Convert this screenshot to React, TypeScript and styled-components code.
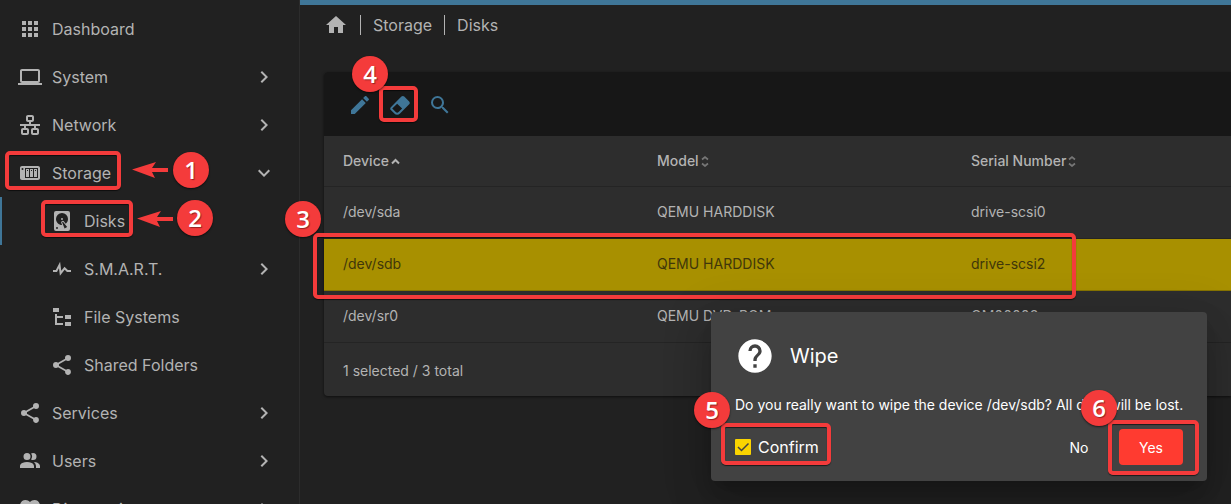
import React from "react";
import styled, { createGlobalStyle } from "styled-components";

const red = "#f43b3b";
const blue = "#3f7698";

const Global = createGlobalStyle`
  * { box-sizing: border-box; }
  body {
    margin: 0;
    background: #212121;
    color: #b3b3b3;
    font-family: Inter, "Liberation Sans", sans-serif;
    font-size: 14px;
    overflow: hidden;
  }
  button, input { font: inherit; }
`;

const icons = {
  apps: "M16,20H20V16H16M16,14H20V10H16M10,8H14V4H10M16,8H20V4H16M10,14H14V10H10M4,14H8V10H4M4,20H8V16H4M10,20H14V16H10M4,8H8V4H4V8Z",
  laptop:
    "M4,6H20V16H4M20,18A2,2 0 0,0 22,16V6C22,4.89 21.1,4 20,4H4C2.89,4 2,4.89 2,6V16A2,2 0 0,0 4,18H0V20H24V18H20Z",
  lan: "M10,2C8.89,2 8,2.89 8,4V7C8,8.11 8.89,9 10,9H11V11H2V13H6V15H5C3.89,15 3,15.89 3,17V20C3,21.11 3.89,22 5,22H9C10.11,22 11,21.11 11,20V17C11,15.89 10.11,15 9,15H8V13H16V15H15C13.89,15 13,15.89 13,17V20C13,21.11 13.89,22 15,22H19C20.11,22 21,21.11 21,20V17C21,15.89 20.11,15 19,15H18V13H22V11H13V9H14C15.11,9 16,8.11 16,7V4C16,2.89 15.11,2 14,2H10M10,4H14V7H10V4M5,17H9V20H5V17M15,17H19V20H15V17Z",
  nas: "M4,5C2.89,5 2,5.89 2,7V17C2,18.11 2.89,19 4,19H20C21.11,19 22,18.11 22,17V7C22,5.89 21.11,5 20,5H4M4.5,7A1,1 0 0,1 5.5,8A1,1 0 0,1 4.5,9A1,1 0 0,1 3.5,8A1,1 0 0,1 4.5,7M7,7H20V17H7V7M8,8V16H11V8H8M12,8V16H15V8H12M16,8V16H19V8H16M9,9H10V10H9V9M13,9H14V10H13V9M17,9H18V10H17V9Z",
  harddisk:
    "M6,2H18A2,2 0 0,1 20,4V20A2,2 0 0,1 18,22H6A2,2 0 0,1 4,20V4A2,2 0 0,1 6,2M12,4A6,6 0 0,0 6,10C6,13.31 8.69,16 12.1,16L11.22,13.77C10.95,13.29 11.11,12.68 11.59,12.4L12.45,11.9C12.93,11.63 13.54,11.79 13.82,12.27L15.74,14.69C17.12,13.59 18,11.9 18,10A6,6 0 0,0 12,4M12,9A1,1 0 0,1 13,10A1,1 0 0,1 12,11A1,1 0 0,1 11,10A1,1 0 0,1 12,9M7,18A1,1 0 0,0 6,19A1,1 0 0,0 7,20A1,1 0 0,0 8,19A1,1 0 0,0 7,18M12.09,13.27L14.58,19.58L17.17,18.08L12.95,12.77L12.09,13.27Z",
  pulse:
    "M3,13H5.79L10.1,4.79L11.28,13.75L14.5,9.66L17.83,13H21V15H17L14.67,12.67L9.92,18.73L8.94,11.31L7,15H3V13Z",
  tree: "M3,3H9V7H3V3M15,10H21V14H15V10M15,17H21V21H15V17M13,13H7V18H13V20H7L5,20V9H7V11H13V13Z",
  share:
    "M18,16.08C17.24,16.08 16.56,16.38 16.04,16.85L8.91,12.7C8.96,12.47 9,12.24 9,12C9,11.76 8.96,11.53 8.91,11.3L15.96,7.19C16.5,7.69 17.21,8 18,8A3,3 0 0,0 21,5A3,3 0 0,0 18,2A3,3 0 0,0 15,5C15,5.24 15.04,5.47 15.09,5.7L8.04,9.81C7.5,9.31 6.79,9 6,9A3,3 0 0,0 3,12A3,3 0 0,0 6,15C6.79,15 7.5,14.69 8.04,14.19L15.16,18.34C15.11,18.55 15.08,18.77 15.08,19C15.08,20.61 16.39,21.91 18,21.91C19.61,21.91 20.92,20.61 20.92,19A2.92,2.92 0 0,0 18,16.08Z",
  users:
    "M16 17V19H2V17S2 13 9 13 16 17 16 17M12.5 7.5A3.5 3.5 0 1 0 9 11A3.5 3.5 0 0 0 12.5 7.5M15.94 13A5.32 5.32 0 0 1 18 17V19H22V17S22 13.37 15.94 13M15 4A3.39 3.39 0 0 0 13.07 4.59A5 5 0 0 1 13.07 10.41A3.39 3.39 0 0 0 15 11A3.5 3.5 0 0 0 15 4Z",
  heart:
    "M12,21.35L10.55,20.03C5.4,15.36 2,12.27 2,8.5C2,5.41 4.42,3 7.5,3C9.24,3 10.91,3.81 12,5.08C13.09,3.81 14.76,3 16.5,3C19.58,3 22,5.41 22,8.5C22,12.27 18.6,15.36 13.45,20.03L12,21.35Z",
  home: "M10,20V14H14V20H19V12H22L12,3L2,12H5V20H10Z",
  pencil:
    "M20.71,7.04C21.1,6.65 21.1,6 20.71,5.63L18.37,3.29C18,2.9 17.35,2.9 16.96,3.29L15.12,5.12L18.87,8.87M3,17.25V21H6.75L17.81,9.93L14.06,6.18L3,17.25Z",
  eraser:
    "M16.24,3.56L21.19,8.5C21.97,9.29 21.97,10.55 21.19,11.34L12,20.53C10.44,22.09 7.91,22.09 6.34,20.53L2.81,17C2.03,16.21 2.03,14.95 2.81,14.16L13.41,3.56C14.2,2.78 15.46,2.78 16.24,3.56M4.22,15.58L7.76,19.11C8.54,19.9 9.8,19.9 10.59,19.11L14.12,15.58L9.17,10.63L4.22,15.58Z",
  magnify:
    "M9.5,3A6.5,6.5 0 0,1 16,9.5C16,11.11 15.41,12.59 14.44,13.73L14.71,14H15.5L20.5,19L19,20.5L14,15.5V14.71L13.73,14.44C12.59,15.41 11.11,16 9.5,16A6.5,6.5 0 0,1 3,9.5A6.5,6.5 0 0,1 9.5,3M9.5,5C7,5 5,7 5,9.5C5,12 7,14 9.5,14C12,14 14,12 14,9.5C14,7 12,5 9.5,5Z",
  help: "M15.07,11.25L14.17,12.17C13.45,12.89 13,13.5 13,15H11V14.5C11,13.39 11.45,12.39 12.17,11.67L13.41,10.41C13.78,10.05 14,9.55 14,9C14,7.89 13.1,7 12,7A2,2 0 0,0 10,9H8A4,4 0 0,1 12,5A4,4 0 0,1 16,9C16,9.88 15.64,10.67 15.07,11.25M13,19H11V17H13M12,2A10,10 0 0,0 2,12A10,10 0 0,0 12,22A10,10 0 0,0 22,12C22,6.47 17.5,2 12,2Z",
  right: "M8.59,16.58L13.17,12L8.59,7.41L10,6L16,12L10,18L8.59,16.58Z",
  down: "M7.41,8.58L12,13.17L16.59,8.58L18,10L12,16L6,10L7.41,8.58Z",
};

type IconName = keyof typeof icons;

const Svg = styled.svg`
  display: block;
  flex: none;
  fill: currentColor;
`;

const Icon = ({ name, size = 24 }: { name: IconName; size?: number }) => (
  <Svg width={size} height={size} viewBox="0 0 24 24" aria-hidden="true">
    <path d={icons[name]} />
  </Svg>
);

/* Tutorial callouts, each anchored to the part it points at. */

const Frame = styled.span<{ $x: number; $y: number; $w: number; $h: number }>`
  position: absolute;
  left: ${(p) => p.$x}px;
  top: ${(p) => p.$y}px;
  width: ${(p) => p.$w}px;
  height: ${(p) => p.$h}px;
  border: 4px solid ${red};
  border-radius: 5px;
  box-shadow: 0 1px 1px rgba(0, 0, 0, 0.6), inset 0 1px 1px rgba(0, 0, 0, 0.6);
  pointer-events: none;
  z-index: 2;
`;

const Badge = styled.span<{ $x: number; $y: number }>`
  position: absolute;
  left: ${(p) => p.$x}px;
  top: ${(p) => p.$y}px;
  width: 36px;
  height: 36px;
  border-radius: 50%;
  background: ${red};
  color: #fff;
  font: 600 24px/36px "Open Sans", sans-serif;
  text-align: center;
  text-shadow: 1px 1px 1px rgba(0, 0, 0, 0.4);
  box-shadow: 0 1px 2px rgba(0, 0, 0, 0.6);
  pointer-events: none;
  z-index: 3;
`;

const ArrowSvg = styled.svg<{ $x: number; $y: number }>`
  position: absolute;
  left: ${(p) => p.$x}px;
  top: ${(p) => p.$y}px;
  fill: ${red};
  pointer-events: none;
`;

const Arrow = ({ x, y }: { x: number; y: number }) => (
  <ArrowSvg $x={x} $y={y} width="36" height="16" viewBox="0 0 36 16" aria-hidden="true">
    <path d="M0 7.5L24 0L20 6H36V10H20L23 16Z" />
  </ArrowSvg>
);

const Page = styled.div`
  display: flex;
  height: 100vh;
  overflow: hidden;
  position: relative;
`;

const Sidebar = styled.nav`
  flex: none;
  width: 300px;
  padding-top: 5px;
  border-right: 1px solid #2c2c2c;
`;

const NavList = styled.ul`
  list-style: none;
  margin: 0;
  padding: 0;
`;

const NavItem = styled.li`
  position: relative;
`;

const NavLink = styled.a<{ $sub?: boolean; $active?: boolean }>`
  display: flex;
  align-items: center;
  gap: 10px;
  height: 48px;
  padding-right: 23px;
  padding-left: ${(p) => (p.$sub ? 50 : 18)}px;
  box-shadow: ${(p) => (p.$active ? `inset 2px 0 ${blue}` : "none")};
  color: inherit;
  font-size: 16px;
  line-height: 24px;
  text-decoration: none;
`;

const NavText = styled.span`
  flex: 1;
`;

const Main = styled.main`
  flex: 1;
  min-width: 0;
  border-top: 5px solid ${blue};
  position: relative;
  z-index: 1;
`;

const Breadcrumb = styled.nav`
  display: flex;
  align-items: center;
  height: 40px;
  padding-left: 24px;
  font-size: 16px;
  line-height: 20px;
`;

const Crumb = styled.a`
  display: block;
  color: inherit;
  text-decoration: none;
  & + & {
    margin-left: 12px;
    padding-left: 12px;
    border-left: 1px solid #b3b3b3;
  }
`;

const Card = styled.section`
  margin: 27px 0 0 24px;
  border-radius: 4px 0 0 4px;
  background: #2d2d2d;
  box-shadow: 0 1px 3px rgba(0, 0, 0, 0.6);
`;

const Toolbar = styled.div`
  position: relative;
  display: flex;
  align-items: center;
  height: 64px;
  padding: 2px 0 0 16px;
  border-radius: 4px 0 0 0;
  background: #171717;
  color: ${blue};
`;

const ToolButton = styled.button`
  display: flex;
  align-items: center;
  justify-content: center;
  width: 40px;
  height: 40px;
  padding: 0;
  border: 0;
  background: none;
  color: inherit;
`;

const TableArea = styled.div`
  position: relative;
`;

const Table = styled.table`
  width: 100%;
  table-layout: fixed;
  border-collapse: separate;
  border-spacing: 0;
  line-height: 20px;
`;

const Head = styled.th<{ $wide?: boolean }>`
  width: ${(p) => (p.$wide ? "auto" : "314px")};
  height: 51px;
  padding: 0 0 0 19px;
  border-bottom: 1px solid #242424;
  font-weight: 500;
  text-align: left;
`;

const HeadLabel = styled.span`
  display: flex;
  align-items: center;
  gap: 2px;
`;

const Row = styled.tr<{ $selected?: boolean }>`
  background: ${(p) => (p.$selected ? "#a89000" : "transparent")};
  color: ${(p) => (p.$selected ? "#40370a" : "inherit")};
`;

const Cell = styled.td`
  height: 52px;
  padding: 0 0 2px 19px;
  border-bottom: 1px solid rgba(0, 0, 0, 0.2);
`;

const TableFooter = styled.div`
  padding: 18px 19px 15px;
  line-height: 20px;
`;

const SortMark = styled.svg`
  fill: none;
  stroke: currentColor;
`;

const SortedUp = () => (
  <SortMark width="9" height="10" viewBox="0 0 9 10" strokeWidth="2" aria-hidden="true">
    <path d="M1 7.5L4.5 4L8 7.5" />
  </SortMark>
);

const Unsorted = () => (
  <SortMark width="8" height="12" viewBox="0 0 8 12" strokeWidth="1.7" opacity="0.55" aria-hidden="true">
    <path d="M1 4.5L4 2L7 4.5M1 8.5L4 11L7 8.5" />
  </SortMark>
);

const Dialog = styled.div`
  position: absolute;
  top: 312px;
  right: 24px;
  width: 496px;
  padding: 24px 24px 16px;
  border-radius: 4px;
  background: #424242;
  color: #fff;
  box-shadow: 0 11px 15px -7px rgba(0, 0, 0, 0.2), 0 24px 38px 3px rgba(0, 0, 0, 0.14),
    0 9px 46px 8px rgba(0, 0, 0, 0.12);
  z-index: 5;
`;

const DialogHeader = styled.header`
  display: flex;
  align-items: center;
  gap: 15px;
`;

const DialogTitle = styled.h2`
  margin: 0;
  font-size: 20px;
  font-weight: 400;
  line-height: 32px;
`;

const DialogText = styled.p`
  margin: 19px 0 14px;
  line-height: 20px;
  white-space: nowrap;
`;

const DialogActions = styled.div`
  display: flex;
  align-items: center;
  gap: 8px;
`;

const ConfirmLabel = styled.label`
  display: flex;
  align-items: center;
  gap: 7px;
  margin-right: auto;
  font-size: 16px;
  line-height: 24px;
`;

const CheckWrap = styled.span`
  position: relative;
  display: flex;
`;

const CheckInput = styled.input`
  appearance: none;
  width: 16px;
  height: 16px;
  margin: 0;
  border: 2px solid #b3b3b3;
  border-radius: 1px;
  &:checked {
    border: 0;
    background: #fad400;
  }
`;

const CheckMark = styled.svg`
  position: absolute;
  inset: 0;
  fill: none;
  stroke: #424242;
  stroke-width: 1.5;
  pointer-events: none;
`;

const DialogButton = styled.button<{ $danger?: boolean }>`
  width: 64px;
  height: 36px;
  padding: 0;
  border: 0;
  border-radius: 4px;
  background: ${(p) => (p.$danger ? "#ff3b30" : "transparent")};
  color: #fff;
`;

type NavEntry = {
  label: string;
  icon: IconName;
  arrow?: "right" | "down";
  sub?: boolean;
  active?: boolean;
  callout?: React.ReactNode;
};

const navEntries: NavEntry[] = [
  { label: "Dashboard", icon: "apps" },
  { label: "System", icon: "laptop", arrow: "right" },
  { label: "Network", icon: "lan", arrow: "right" },
  {
    label: "Storage",
    icon: "nas",
    arrow: "down",
    callout: (
      <>
        <Frame $x={5} $y={2} $w={116} $h={39} />
        <Arrow x={132} y={13} />
        <Badge $x={173} $y={3}>1</Badge>
      </>
    ),
  },
  {
    label: "Disks",
    icon: "harddisk",
    sub: true,
    active: true,
    callout: (
      <>
        <Frame $x={41} $y={3} $w={92} $h={37} />
        <Arrow x={137} y={14} />
        <Badge $x={177} $y={3}>2</Badge>
      </>
    ),
  },
  { label: "S.M.A.R.T.", icon: "pulse", arrow: "right", sub: true },
  { label: "File Systems", icon: "tree", sub: true },
  { label: "Shared Folders", icon: "share", sub: true },
  { label: "Services", icon: "share", arrow: "right" },
  { label: "Users", icon: "users", arrow: "right" },
  { label: "Diagnostics", icon: "heart", arrow: "right" },
];

const disks = [
  { device: "/dev/sda", model: "QEMU HARDDISK", serial: "drive-scsi0" },
  { device: "/dev/sdb", model: "QEMU HARDDISK", serial: "drive-scsi2", selected: true },
  { device: "/dev/sr0", model: "QEMU DVD-ROM", serial: "QM00003" },
];

export default function App() {
  return (
    <>
      <Global />
      <Page>
        <Sidebar aria-label="Main">
          <NavList>
            {navEntries.map((e) => (
              <NavItem key={e.label}>
                <NavLink href="#" $sub={e.sub} $active={e.active}>
                  <Icon name={e.icon} />
                  <NavText>{e.label}</NavText>
                  {e.arrow && <Icon name={e.arrow} />}
                </NavLink>
                {e.callout}
              </NavItem>
            ))}
          </NavList>
        </Sidebar>
        <Main>
          <Breadcrumb aria-label="Breadcrumb">
            <Crumb href="#" aria-label="Home">
              <Icon name="home" />
            </Crumb>
            <Crumb href="#">Storage</Crumb>
            <Crumb href="#">Disks</Crumb>
          </Breadcrumb>
          <Card>
            <Toolbar>
              <ToolButton aria-label="Edit"><Icon name="pencil" /></ToolButton>
              <ToolButton aria-label="Wipe"><Icon name="eraser" /></ToolButton>
              <ToolButton aria-label="Scan"><Icon name="magnify" /></ToolButton>
              <Frame $x={55} $y={14} $w={39} $h={36} />
              <Badge $x={28} $y={-16}>4</Badge>
            </Toolbar>
            <TableArea>
              <Table>
                <thead>
                  <tr>
                    <Head><HeadLabel>Device<SortedUp /></HeadLabel></Head>
                    <Head><HeadLabel>Model<Unsorted /></HeadLabel></Head>
                    <Head $wide><HeadLabel>Serial Number<Unsorted /></HeadLabel></Head>
                  </tr>
                </thead>
                <tbody>
                  {disks.map((d) => (
                    <Row key={d.device} $selected={d.selected}>
                      <Cell>{d.device}</Cell>
                      <Cell>{d.model}</Cell>
                      <Cell>{d.serial}</Cell>
                    </Row>
                  ))}
                </tbody>
              </Table>
              <TableFooter>1 selected / 3 total</TableFooter>
              <Frame $x={-11} $y={97} $w={763} $h={66} />
              <Badge $x={-39} $y={65}>3</Badge>
            </TableArea>
          </Card>
        </Main>
        <Dialog role="dialog" aria-labelledby="wipe-title">
          <DialogHeader>
            <Icon name="help" size={40} />
            <DialogTitle id="wipe-title">Wipe</DialogTitle>
          </DialogHeader>
          <DialogText>Do you really want to wipe the device /dev/sdb? All data will be lost.</DialogText>
          <DialogActions>
            <ConfirmLabel>
              <CheckWrap>
                <CheckInput type="checkbox" defaultChecked />
                <CheckMark width="16" height="16" viewBox="0 0 16 16" aria-hidden="true">
                  <path d="M3 8L6.5 11.5L13.5 4.5" />
                </CheckMark>
              </CheckWrap>
              Confirm
            </ConfirmLabel>
            <DialogButton>No</DialogButton>
            <DialogButton $danger>Yes</DialogButton>
          </DialogActions>
          <Frame $x={10} $y={111} $w={110} $h={42} />
          <Badge $x={-17} $y={80}>5</Badge>
          <Frame $x={397} $y={108} $w={91} $h={55} />
          <Badge $x={370} $y={78}>6</Badge>
        </Dialog>
      </Page>
    </>
  );
}
